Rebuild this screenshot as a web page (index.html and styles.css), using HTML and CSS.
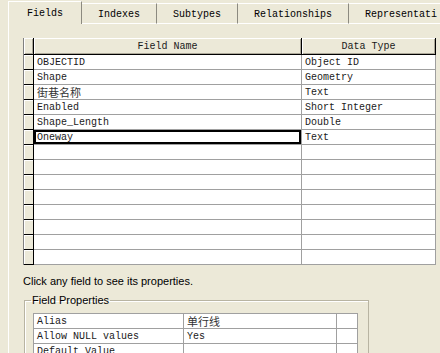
FILE: index.html
```html
<!DOCTYPE html>
<html lang="en">
<head>
    <meta charset="UTF-8">
    <meta name="viewport" content="width=device-width, initial-scale=1.0">
    <title>Layer Properties - Fields</title>
    <link rel="stylesheet" href="styles.css">
</head>
<body>
    <div class="dialog">
        <div class="tabs">
            <div class="tab active">Fields</div>
            <div class="tab">Indexes</div>
            <div class="tab">Subtypes</div>
            <div class="tab">Relationships</div>
            <div class="tab">Representati</div>
        </div>

        <div class="page">
            <div class="grid">
                <div class="cell rh head"></div>
                <div class="cell head">Field Name</div>
                <div class="cell head">Data Type</div>

                <div class="cell rh"></div>
                <div class="cell">OBJECTID</div>
                <div class="cell">Object ID</div>

                <div class="cell rh"></div>
                <div class="cell">Shape</div>
                <div class="cell">Geometry</div>

                <div class="cell rh"></div>
                <div class="cell"><span class="cjk">街巷名称</span></div>
                <div class="cell">Text</div>

                <div class="cell rh"></div>
                <div class="cell">Enabled</div>
                <div class="cell">Short Integer</div>

                <div class="cell rh"></div>
                <div class="cell">Shape_Length</div>
                <div class="cell">Double</div>

                <div class="cell rh"></div>
                <div class="cell current">Oneway</div>
                <div class="cell">Text</div>

                <div class="cell rh"></div><div class="cell"></div><div class="cell"></div>
                <div class="cell rh"></div><div class="cell"></div><div class="cell"></div>
                <div class="cell rh"></div><div class="cell"></div><div class="cell"></div>
                <div class="cell rh"></div><div class="cell"></div><div class="cell"></div>
                <div class="cell rh"></div><div class="cell"></div><div class="cell"></div>
                <div class="cell rh"></div><div class="cell"></div><div class="cell"></div>
                <div class="cell rh"></div><div class="cell"></div><div class="cell"></div>
                <div class="cell rh"></div><div class="cell"></div><div class="cell"></div>
            </div>

            <p class="hint">Click any field to see its properties.</p>

            <fieldset class="props">
                <legend>Field Properties</legend>
                <div class="prop-grid">
                    <div class="pcell">Alias</div>
                    <div class="pcell"><span class="cjk">单行线</span></div>
                    <div class="pcell"></div>

                    <div class="pcell">Allow NULL values</div>
                    <div class="pcell">Yes</div>
                    <div class="pcell"></div>

                    <div class="pcell">Default Value</div>
                    <div class="pcell"></div>
                    <div class="pcell"></div>
                </div>
            </fieldset>
        </div>
    </div>
</body>
</html>
```

FILE: styles.css
```css
body {
    margin: 0;
    background-color: #ece9d8;
    font: 11px "Liberation Sans", Arial, sans-serif;
    color: #000;
    overflow: hidden;
}
.dialog {
    padding-left: 8px;
    height: 353px;
    overflow: hidden;
}

/* tab strip */
.tabs {
    display: flex;
    height: 24px;
    white-space: nowrap;
    font: 10px "Liberation Mono", monospace;
}
.tab {
    flex: none;
    margin-top: 3px;
    padding: 2px 16px 0;
    line-height: 17px;
    border-top: 1px solid #fff;
    border-right: 1px solid #8c8a80;
    border-bottom: 1px solid #fff;
}
.tab.active {
    margin-top: 1px;
    padding: 2px 18px 0;
    line-height: 20px;
    border-left: 1px solid #fff;
    border-bottom: none;
}

.page {
    border-left: 1px solid #fff;
    padding: 14px 0 0 14px;
    height: 329px;
    box-sizing: border-box;
}

/* field grid */
.grid {
    display: grid;
    grid-template-columns: 10px 268px 134px;
    grid-template-rows: 17px;
    grid-auto-rows: 15px;
    width: 412px;
    border-left: 1px solid #808080;
    background-color: #fff;
    font: 10px "Liberation Mono", monospace;
    color: #1a1a1a;
}
.cell {
    box-sizing: border-box;
    padding: 1px 0 0 3px;
    line-height: 13px;
    white-space: nowrap;
    overflow: hidden;
    border-right: 1px solid #a0a0a0;
    border-bottom: 1px solid #a0a0a0;
}
.cell.rh {
    padding: 0;
    background-color: #ece9d8;
    border-right-color: #000;
    border-bottom-color: #000;
    box-shadow: inset 1px 1px #fff;
}
.cell.head {
    padding: 1px 0 0;
    line-height: 15px;
    text-align: center;
    background-color: #ece9d8;
    border-right: 1px solid #000;
    border-bottom: 1px solid #000;
    box-shadow: inset 1px 1px #fff, inset -1px -1px #aca899;
}
.cell.current {
    box-shadow: inset 0 0 0 2px #000;
}
.cjk {
    font-family: "Noto Sans CJK SC", sans-serif;
    font-size: 11px;
    color: #333;
}

.hint {
    margin: 10px 0 0;
    line-height: 13px;
}

/* properties group */
.props {
    width: 329px;
    margin: 6px 0 0 1px;
    padding: 6px 8px 0 6px;
    border: 1px solid #b8b4a2;
    box-shadow: inset 1px 1px #fff;
}
.props legend {
    padding: 0 1px;
    line-height: 13px;
}
.prop-grid {
    display: grid;
    grid-template-columns: 150px 153px 21px;
    grid-auto-rows: 15px;
    width: 324px;
    margin-left: 2px;
    border-left: 1px solid #a0a0a0;
    border-top: 1px solid #a0a0a0;
    background-color: #fff;
    font: 10px "Liberation Mono", monospace;
    color: #1a1a1a;
}
.pcell {
    box-sizing: border-box;
    padding: 1px 0 0 3px;
    line-height: 13px;
    white-space: nowrap;
    border-right: 1px solid #a0a0a0;
    border-bottom: 1px solid #a0a0a0;
}
```
